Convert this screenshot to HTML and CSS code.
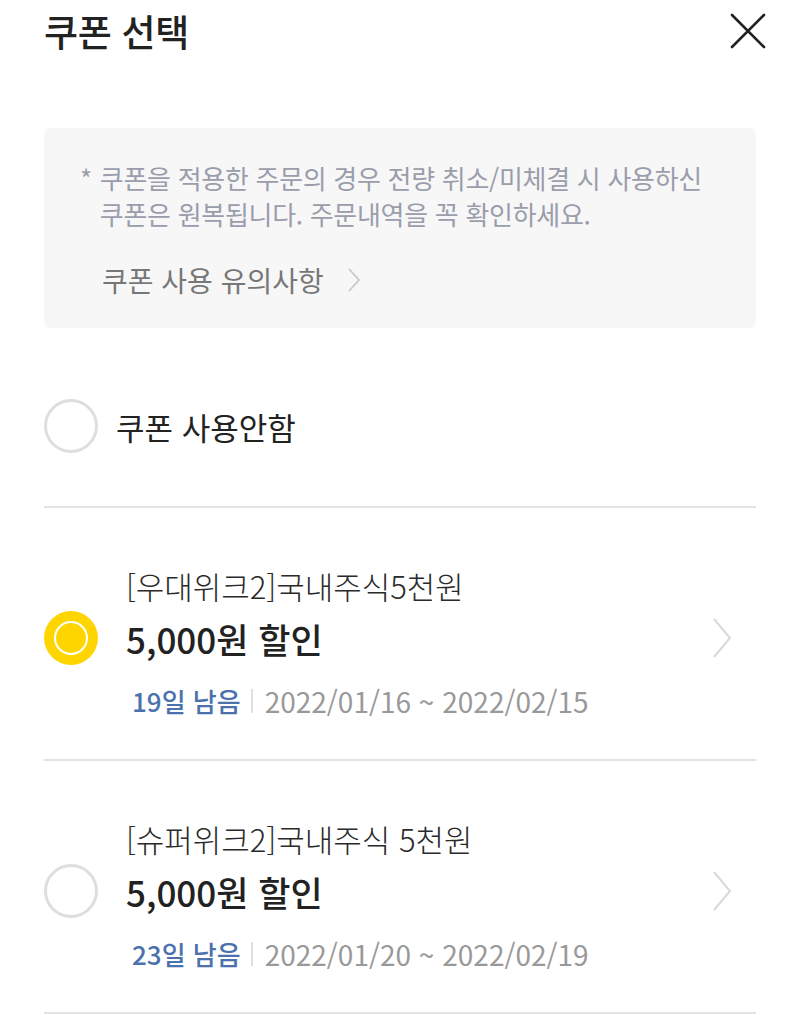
FILE: index.html
```html
<!DOCTYPE html>
<html lang="ko">
<head>
<meta charset="utf-8">
<title>쿠폰 선택</title>
<link rel="stylesheet" href="styles.css">
</head>
<body>
<div class="page">
  <header class="header">
    <h1 class="title">쿠폰 선택</h1>
    <button class="close" aria-label="닫기">
      <svg width="36" height="36" viewBox="0 0 36 36"><path d="M2 2 L34 34 M34 2 L2 34" stroke="#222" stroke-width="2.6" fill="none" stroke-linecap="round"/></svg>
    </button>
  </header>

  <section class="notice">
    <p class="notice-text"><span class="star">*</span><span>쿠폰을 적용한 주문의 경우 전량 취소/미체결 시 사용하신 쿠폰은 원복됩니다. 주문내역을 꼭 확인하세요.</span></p>
    <a class="notice-link">쿠폰 사용 유의사항
      <svg class="small-chev" width="12" height="24" viewBox="0 0 12 24"><path d="M1 1 L11 12 L1 23" stroke="#c8c8c8" stroke-width="1.8" fill="none"/></svg>
    </a>
  </section>

  <div class="option none">
    <span class="radio"></span>
    <span class="none-label">쿠폰 사용안함</span>
  </div>

  <div class="option coupon">
    <span class="radio checked"></span>
    <div class="coupon-body">
      <div class="coupon-name">[우대위크2]국내주식5천원</div>
      <div class="coupon-amount">5,000원 할인</div>
      <div class="coupon-date"><span class="remain">19일 남음</span><span class="sep"></span><span class="period">2022/01/16 ~ 2022/02/15</span></div>
    </div>
    <svg class="chev" width="20" height="40" viewBox="0 0 20 40"><path d="M2 1 L18 20 L2 39" stroke="#d9d9d9" stroke-width="2" fill="none"/></svg>
  </div>

  <div class="option coupon">
    <span class="radio"></span>
    <div class="coupon-body">
      <div class="coupon-name">[슈퍼위크2]국내주식 5천원</div>
      <div class="coupon-amount">5,000원 할인</div>
      <div class="coupon-date"><span class="remain">23일 남음</span><span class="sep"></span><span class="period">2022/01/20 ~ 2022/02/19</span></div>
    </div>
    <svg class="chev" width="20" height="40" viewBox="0 0 20 40"><path d="M2 1 L18 20 L2 39" stroke="#d9d9d9" stroke-width="2" fill="none"/></svg>
  </div>
</div>
</body>
</html>
```

FILE: styles.css
```css
* { box-sizing: border-box; }
html, body { margin: 0; padding: 0; background: #fff; }
body {
  font-family: "Noto Sans CJK KR", "Noto Sans", sans-serif;
  color: #222;
}
.page { width: 800px; padding: 0 44px; }

.header {
  height: 62px;
  display: flex;
  align-items: center;
  justify-content: space-between;
}
.title {
  margin: 0;
  font-size: 37px;
  font-weight: 500;
  line-height: 48px;
  letter-spacing: -0.3px;
  color: #222;
}
.close {
  border: 0;
  background: none;
  padding: 0;
  margin-right: -10px;
  width: 36px;
  height: 36px;
  display: flex;
}

.notice {
  margin-top: 66px;
  height: 200px;
  background: #f7f7f7;
  border-radius: 6px;
  padding: 32px 36px 0 36px;
}
.notice-text {
  margin: 0;
  display: flex;
  gap: 8px;
  font-size: 26px;
  line-height: 36px;
  color: #9a9dab;
  letter-spacing: -0.3px;
  word-break: keep-all;
}
.star { flex: none; }
.notice-link {
  margin-top: 28px;
  margin-left: 22px;
  display: flex;
  align-items: center;
  gap: 24px;
  font-size: 28px;
  line-height: 40px;
  color: #777;
}

.option {
  display: flex;
  align-items: center;
  border-bottom: 2px solid #e2e2e2;
}
.option.none {
  height: 180px;
  padding-top: 18px;
}
.radio {
  flex: none;
  width: 54px;
  height: 54px;
  border-radius: 50%;
  border: 3px solid #dedede;
  background: #fff;
}
.radio.checked {
  border: 0;
  background: #ffd500;
  position: relative;
}
.radio.checked::after {
  content: "";
  position: absolute;
  left: 10px; top: 10px;
  width: 34px; height: 34px;
  border-radius: 50%;
  border: 2.5px solid #fff;
  box-sizing: border-box;
}
.none-label {
  margin-left: 18px;
  font-size: 31px;
  font-weight: 400;
  color: #222;
}

.option.coupon {
  height: 253px;
  padding-top: 8px;
}
.coupon-body {
  flex: 1;
  margin-left: 28px;
  padding-top: 8px;
}
.coupon-name {
  font-size: 31px;
  line-height: 42px;
  font-weight: 300;
  color: #2a2a2a;
}
.coupon-amount {
  margin-top: 8px;
  font-size: 35px;
  line-height: 48px;
  font-weight: 500;
  color: #222;
}
.coupon-date {
  margin-top: 20px;
  display: flex;
  align-items: center;
  font-size: 26px;
  line-height: 36px;
  margin-left: 6px;
}
.remain { color: #4b72ad; font-weight: 500; }
.sep {
  width: 2px;
  height: 24px;
  background: #e0e0e0;
  margin: 0 12px 0 10px;
}
.period { color: #999; font-size: 28px; }
.chev { flex: none; margin-right: 24px; margin-top: 0; }
```
